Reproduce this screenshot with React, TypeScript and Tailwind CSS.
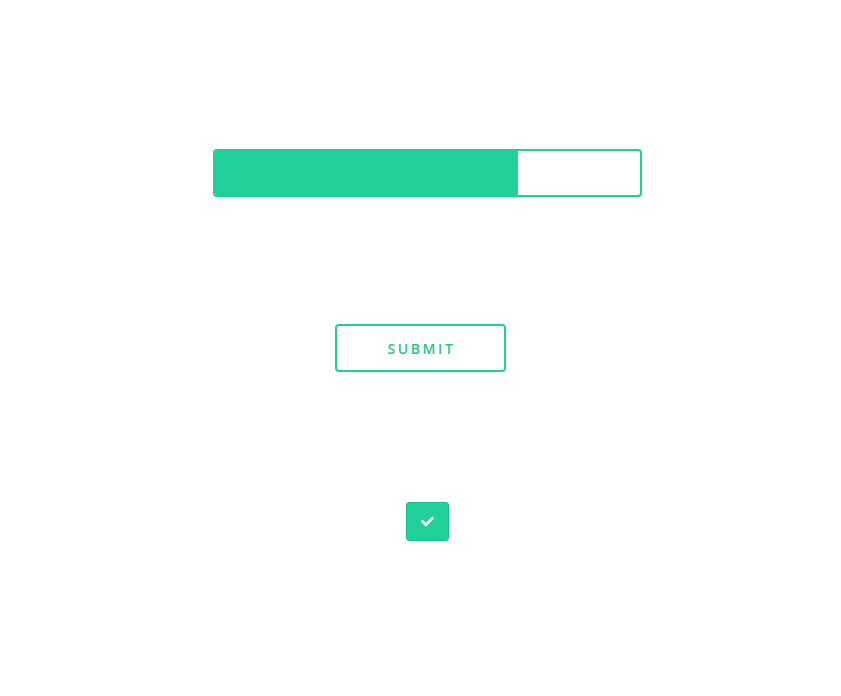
import React from "react";
import { FaCheck } from "react-icons/fa";

export default function App() {
  return (
    <div
      className="w-[841px] h-[696px] bg-white flex flex-col"
      style={{ fontFamily: '"Open Sans", "Liberation Sans", sans-serif' }}
    >
      <div className="pt-[149px] pl-[213px]">
        <div className="w-[429px] h-[48px] border-2 border-[#21cf9a] rounded-[4px] overflow-hidden flex">
          <div className="w-[303px] h-full bg-[#21cf9a]" />
        </div>
      </div>
      <div className="pt-[127px] pl-[335px]">
        <button className="w-[171px] h-[48px] border-2 border-[#21cf9a] rounded-[4px] bg-white flex items-center justify-center pl-[2px] text-[14px] font-semibold tracking-[2.6px] text-[#2cc28f]">
          SUBMIT
        </button>
      </div>
      <div className="pt-[130px] pl-[406px]">
        <div className="w-[43px] h-[39px] rounded-[3px] bg-[#21cf9a] border border-[#1bbf8c] flex items-center justify-center">
          <FaCheck className="text-white w-[13px] h-[13px]" />
        </div>
      </div>
    </div>
  );
}
